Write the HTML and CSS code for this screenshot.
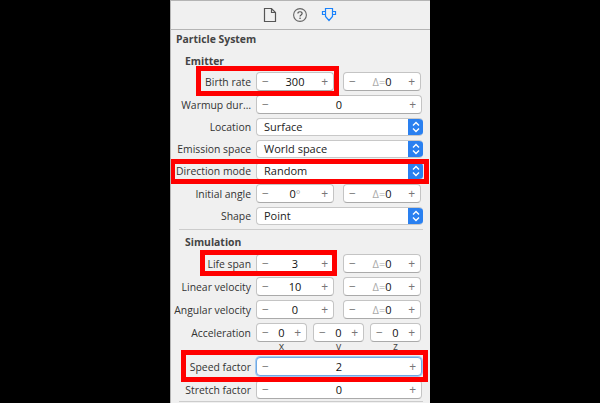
FILE: index.html
```html
<!DOCTYPE html>
<html lang="en">
<head>
<meta charset="utf-8">
<title>Particle System</title>
<link rel="stylesheet" href="styles.css">
</head>
<body>
<main class="panel">
  <nav class="tabs">
    <svg class="icon" width="14" height="16" viewBox="0 0 14 16"><path d="M1.5 1.5H8.5L12.5 5.5V14.5H1.5Z M8.5 1.5V5.5H12.5" fill="none" stroke="#555" stroke-width="1.2"/></svg>
    <svg class="icon" width="16" height="16" viewBox="0 0 16 16"><circle cx="8" cy="8" r="6.4" fill="none" stroke="#666" stroke-width="1.1"/><path d="M5.9 6.4C5.9 4.2 10.1 4.2 10.1 6.4C10.1 8 8 7.8 8 9.6" fill="none" stroke="#555" stroke-width="1.2"/><rect x="7.4" y="10.6" width="1.3" height="1.4" fill="#555"/></svg>
    <svg class="icon icon-active" width="16" height="16" viewBox="0 0 16 16"><path d="M4.5 1.5H11.5V9.5L8 13.5L4.5 9.5Z M4.5 4.5H1.5V7.5H4.5 M11.5 4.5H14.5V7.5H11.5" fill="none" stroke="#1a82fb" stroke-width="1.2"/></svg>
  </nav>
  <h1 class="title">Particle System</h1>
  <h2 class="heading heading-emitter">Emitter</h2>
  <div class="row step-row"><label class="label">Birth rate</label><div class="stepper half"><i>−</i><b>300</b><i>+</i></div><div class="stepper half"><i>−</i><b><s>Δ=</s>0</b><i>+</i></div></div>
  <div class="row step-row"><label class="label">Warmup dur…</label><div class="stepper full"><i>−</i><b>0</b><i>+</i></div></div>
  <div class="row sel-row"><label class="label">Location</label><div class="select"><span>Surface</span><em><svg width="8" height="12" viewBox="0 0 8 12"><path d="M1 4.5L4 1.5L7 4.5M1 7.5L4 10.5L7 7.5" fill="none" stroke="#fff" stroke-width="1.4"/></svg></em></div></div>
  <div class="row sel-row"><label class="label">Emission space</label><div class="select"><span>World space</span><em><svg width="8" height="12" viewBox="0 0 8 12"><path d="M1 4.5L4 1.5L7 4.5M1 7.5L4 10.5L7 7.5" fill="none" stroke="#fff" stroke-width="1.4"/></svg></em></div></div>
  <div class="row sel-row"><label class="label">Direction mode</label><div class="select"><span>Random</span><em><svg width="8" height="12" viewBox="0 0 8 12"><path d="M1 4.5L4 1.5L7 4.5M1 7.5L4 10.5L7 7.5" fill="none" stroke="#fff" stroke-width="1.4"/></svg></em></div></div>
  <div class="row step-row"><label class="label">Initial angle</label><div class="stepper half"><i>−</i><b>0<s>°</s></b><i>+</i></div><div class="stepper half"><i>−</i><b><s>Δ=</s>0</b><i>+</i></div></div>
  <div class="row sel-row"><label class="label">Shape</label><div class="select"><span>Point</span><em><svg width="8" height="12" viewBox="0 0 8 12"><path d="M1 4.5L4 1.5L7 4.5M1 7.5L4 10.5L7 7.5" fill="none" stroke="#fff" stroke-width="1.4"/></svg></em></div></div>
  <hr class="sep">
  <h2 class="heading heading-sim">Simulation</h2>
  <div class="row step-row"><label class="label">Life span</label><div class="stepper half"><i>−</i><b>3</b><i>+</i></div><div class="stepper half"><i>−</i><b><s>Δ=</s>0</b><i>+</i></div></div>
  <div class="row step-row"><label class="label">Linear velocity</label><div class="stepper half"><i>−</i><b>10</b><i>+</i></div><div class="stepper half"><i>−</i><b><s>Δ=</s>0</b><i>+</i></div></div>
  <div class="row step-row"><label class="label">Angular velocity</label><div class="stepper half"><i>−</i><b>0</b><i>+</i></div><div class="stepper half"><i>−</i><b><s>Δ=</s>0</b><i>+</i></div></div>
  <div class="row accel-row"><label class="label">Acceleration</label><div class="stepper third"><i>−</i><b>0</b><i>+</i></div><div class="stepper third"><i>−</i><b>0</b><i>+</i></div><div class="stepper third"><i>−</i><b>0</b><i>+</i></div></div>
  <div class="axes"><span>x</span><span>y</span><span>z</span></div>
  <div class="row step-row"><label class="label">Speed factor</label><div class="stepper full focus"><i>−</i><b>2</b><i>+</i></div></div>
  <div class="row step-row row-last"><label class="label">Stretch factor</label><div class="stepper full"><i>−</i><b>0</b><i>+</i></div></div>
  <hr class="sep">
  <div class="mark mark-birth"></div>
  <div class="mark mark-direction"></div>
  <div class="mark mark-life"></div>
  <div class="mark mark-speed"></div>
</main>
</body>
</html>
```
FILE: styles.css
```css
* { box-sizing: border-box; }
html, body { margin: 0; height: 403px; overflow: hidden; background: #000; }
body { font-family: "Open Sans", "Liberation Sans", sans-serif; font-size: 10.4px; color: #333; }
.panel { position: relative; width: 260px; height: 403px; margin-left: 170px; background: #f0f0f0; border-left: 1px solid #b4b4b4; border-top: 1px solid #b4b4b4; overflow: hidden; }
.tabs { display: flex; justify-content: center; align-items: center; gap: 15px; height: 29px; border-bottom: 1px solid #b4b4b4; padding-right: 2px; }
.icon { display: block; }
.icon-active { margin-left: -2px; }
.title { margin: 0; height: 18px; padding: 1px 0 0 5px; font-size: 10.4px; line-height: 16px; font-weight: 700; color: #444; }
.heading { margin: 0; font-size: 10.4px; line-height: 14px; font-weight: 700; color: #444; padding-left: 14px; }
.heading-emitter { margin-top: 6px; height: 18px; }
.heading-sim { margin-top: 5px; height: 19px; }
.row { display: flex; align-items: center; margin-bottom: 4px; }
.row-last { margin-bottom: 2px; }
.step-row, .accel-row { height: 19px; }
.sel-row { height: 18px; }
.label { width: 80px; margin-right: 5px; text-align: right; white-space: nowrap; color: #333; }
.stepper { display: flex; align-items: center; justify-content: space-between; height: 19px; padding: 0 5px; background: #fff; border: 1px solid #c4c4c4; border-bottom-color: #aaa; border-radius: 4px; color: #111; }
.stepper i { font-style: normal; color: #777; font-size: 12px; }
.stepper b { font-weight: 400; flex: 1; text-align: center; font-size: 11px; }
.stepper s { text-decoration: none; color: #aaa; }
.half { width: 78px; margin-right: 9px; }
.full { width: 166px; }
.third { width: 51px; margin-right: 6px; }
.focus { border-color: #6fa9e6; box-shadow: 0 0 0 1px #a5cbf0; }
.select { display: flex; width: 167px; height: 18px; background: #fff; border: 1px solid #c8c8c8; border-right: 0; border-radius: 4px; overflow: hidden; color: #222; font-size: 11px; }
.select span { flex: 1; padding-left: 7px; line-height: 16px; }
.select em { display: flex; align-items: center; justify-content: center; width: 15px; margin-top: -1px; margin-bottom: -1px; background: #2a80f0; }
.sep { margin: 0 0 0 8px; width: 244px; height: 1px; border: 0; background: #ccc; }
.axes { display: flex; height: 12px; margin: -5px 0 4px 85px; line-height: 11px; color: #444; }
.axes span { width: 51px; margin-right: 6px; text-align: center; }
.mark { position: absolute; border: 5px solid #f00; }
.mark-birth { left: 25px; top: 65px; width: 143px; height: 30px; }
.mark-direction { left: -1px; top: 158px; width: 259px; height: 25px; }
.mark-life { left: 29px; top: 249px; width: 137px; height: 26px; }
.mark-speed { left: 10px; top: 349px; width: 247px; height: 32px; }
```
